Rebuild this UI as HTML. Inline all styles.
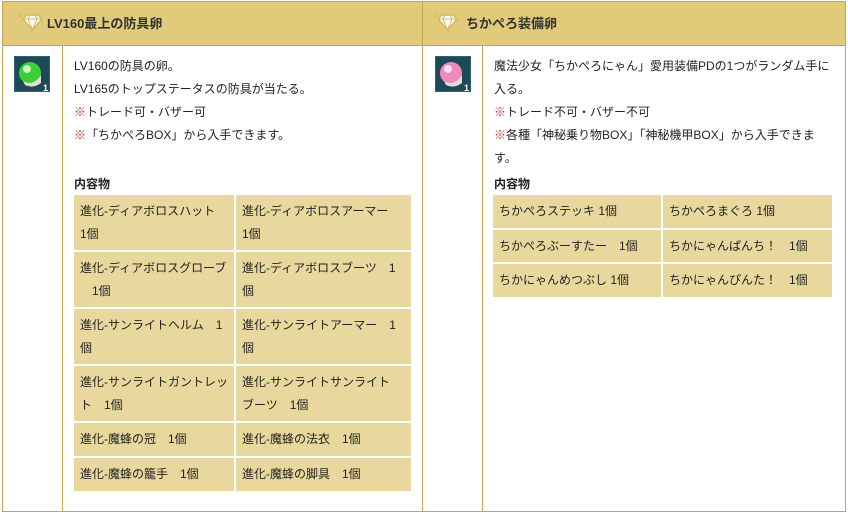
<!DOCTYPE html>
<html><head><meta charset="utf-8"><style>
*{margin:0;padding:0;box-sizing:border-box}
body{width:848px;height:515px;background:#fff;font-family:"Liberation Sans","Noto Sans CJK JP",sans-serif;font-size:12px;color:#222;position:relative;overflow:hidden}
.a{position:absolute}
.hd{background:#e1ca7a;border:1px solid #c6a74e;font-weight:bold;font-size:13px;color:#333;line-height:43px;padding-left:44px}
.ln{background:#c6a74e}
.txt{line-height:23px}
.r{color:#c0392b}
table{border-collapse:collapse;position:absolute;table-layout:fixed}
td{background:#e8d89d;border:2px solid #fff;padding:4px 6px;line-height:23px;vertical-align:middle;color:#222;white-space:nowrap;overflow:hidden}
.icon{width:36px;height:36px;background:#1d4a55;border:1px solid #2c6470}
</style></head><body>
<div class="a hd" style="left:2px;top:1px;width:421px;height:45px">LV160最上の防具卵</div>
<div class="a hd" style="left:422px;top:1px;width:424px;height:45px;padding-left:43px">ちかぺろ装備卵</div>
<svg class="a" style="left:15px;top:10px" width="30" height="24" viewBox="0 0 30 24"><path d="M8 9 L12 5 H23 L27 9 L17.5 20 Z" fill="#fff" stroke="#d4b860" stroke-width="1.5"/><path d="M8 9 H27 M13 9 L17.5 20 L22 9 M15 5 L13 9 M20 5 L22 9" fill="none" stroke="#d4b860" stroke-width="1"/><path d="M3 5 L6 7 M6 2 L7 5" stroke="#d4b860" stroke-width="1.2"/></svg>
<svg class="a" style="left:430px;top:10px" width="30" height="24" viewBox="0 0 30 24"><path d="M8 9 L12 5 H23 L27 9 L17.5 20 Z" fill="#fff" stroke="#d4b860" stroke-width="1.5"/><path d="M8 9 H27 M13 9 L17.5 20 L22 9 M15 5 L13 9 M20 5 L22 9" fill="none" stroke="#d4b860" stroke-width="1"/><path d="M3 5 L6 7 M6 2 L7 5" stroke="#d4b860" stroke-width="1.2"/></svg>
<div class="a ln" style="left:2px;top:45px;width:1px;height:467px"></div>
<div class="a ln" style="left:62px;top:45px;width:1px;height:467px"></div>
<div class="a ln" style="left:422px;top:45px;width:1px;height:467px"></div>
<div class="a ln" style="left:482px;top:45px;width:1px;height:467px"></div>
<div class="a ln" style="left:845px;top:45px;width:1px;height:467px"></div>
<div class="a ln" style="left:2px;top:511px;width:844px;height:1px"></div>
<div class="a icon" style="left:14px;top:56px"><svg width="36" height="36"><circle cx="15" cy="16" r="11" fill="#3ccf3a"/><circle cx="12" cy="12" r="4" fill="#c9f8b8"/><path d="M8 24 Q18 30 26 18 L26 26 Q18 32 10 28Z" fill="#ddd"/><text x="28" y="34" fill="#fff" font-size="9" font-weight="bold">1</text></svg></div>
<div class="a icon" style="left:435px;top:56px"><svg width="36" height="36"><circle cx="15" cy="16" r="11" fill="#f08ab8"/><circle cx="12" cy="12" r="4" fill="#fde0ee"/><path d="M8 24 Q18 30 26 18 L26 26 Q18 32 10 28Z" fill="#ddd"/><text x="28" y="34" fill="#fff" font-size="9" font-weight="bold">1</text></svg></div>
<div class="a txt" style="left:74px;top:55px;width:340px">LV160の防具の卵。<br>LV165のトップステータスの防具が当たる。<br><span class="r">※</span>トレード可・バザー可<br><span class="r">※</span>「ちかぺろBOX」から入手できます。</div>
<div class="a" style="left:74px;top:175px;font-weight:bold">内容物</div>
<table style="left:72px;top:193px;width:341px">
<tr style="height:57px"><td style="width:162px">進化-ディアボロスハット<br>1個</td><td>進化-ディアボロスアーマー<br>1個</td></tr>
<tr style="height:57px"><td>進化-ディアボロスグローブ<br>　1個</td><td>進化-ディアボロスブーツ　1<br>個</td></tr>
<tr style="height:57px"><td>進化-サンライトヘルム　1<br>個</td><td>進化-サンライトアーマー　1<br>個</td></tr>
<tr style="height:57px"><td>進化-サンライトガントレッ<br>ト　1個</td><td>進化-サンライトサンライト<br>ブーツ　1個</td></tr>
<tr style="height:35px"><td>進化-魔蜂の冠　1個</td><td>進化-魔蜂の法衣　1個</td></tr>
<tr style="height:35px"><td>進化-魔蜂の籠手　1個</td><td>進化-魔蜂の脚具　1個</td></tr>
</table>
<div class="a txt" style="left:494px;top:55px;width:345px;white-space:nowrap">魔法少女「ちかぺろにゃん」愛用装備PDの1つがランダム手に<br>入る。<br><span class="r">※</span>トレード不可・バザー不可<br><span class="r">※</span>各種「神秘乗り物BOX」「神秘機甲BOX」から入手できま<br>す。</div>
<div class="a" style="left:494px;top:175px;font-weight:bold">内容物</div>
<table style="left:491px;top:193px;width:343px">
<tr style="height:35px"><td style="width:170px">ちかぺろステッキ 1個</td><td>ちかぺろまぐろ 1個</td></tr>
<tr style="height:34px"><td>ちかぺろぶーすたー　1個</td><td>ちかにゃんぱんち！　1個</td></tr>
<tr style="height:35px"><td>ちかにゃんめつぶし 1個</td><td>ちかにゃんぴんた！　1個</td></tr>
</table>
</body></html>
